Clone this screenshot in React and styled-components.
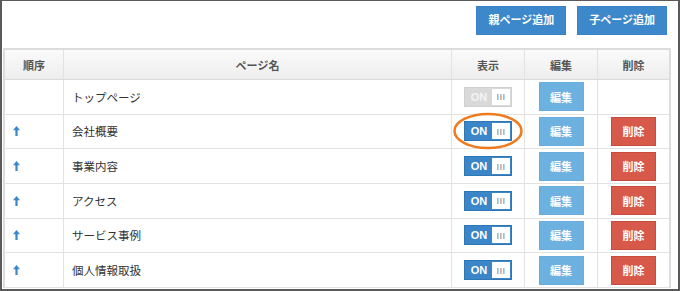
import React from "react";
import styled, { createGlobalStyle, css } from "styled-components";

const Global = createGlobalStyle`
  html, body { margin: 0; padding: 0; background: #fff; }
  body { font-family: "Liberation Sans", "Noto Sans CJK JP", sans-serif; }
  * { box-sizing: border-box; }
`;

const Frame = styled.div`
  width: 680px;
  height: 291px;
  border-style: solid;
  border-color: #5a5a5a;
  border-width: 1px 2px 2px 2px;
  background: #fff;
  overflow: hidden;
`;

const Toolbar = styled.div`
  display: flex;
  justify-content: flex-end;
  gap: 11px;
  padding: 5px 11px 0 0;
  margin-bottom: 13px;
`;

const PrimaryButton = styled.button`
  height: 29px;
  padding: 0 11px;
  background: #3d88ca;
  border: 1px solid #3a84c6;
  color: #fff;
  font-family: "Liberation Sans", "Noto Sans CJK JP", sans-serif;
  font-weight: 700;
  font-size: 11px;
  line-height: 1;
  border-radius: 0;
  cursor: pointer;
`;

const Table = styled.div`
  margin: 0 7px 0 1px;
  border: 2px solid #dcdcdc;
  border-bottom: none;
  display: grid;
  grid-template-columns: 59px 388px 73px 73px 1fr;
  grid-template-rows: 30px repeat(6, 34.67px);
`;

const Cell = styled.div`
  position: relative;
  display: flex;
  align-items: center;
  justify-content: ${(p) => (p.$align === "left" ? "flex-start" : "center")};
  padding: ${(p) => (p.$align === "left" ? "0 0 0 8px" : "0")};
  border-bottom: 1px solid #e2e2e2;
  border-right: ${(p) => (p.$last ? "none" : "1px solid #e2e2e2")};
  font-size: 11.5px;
  color: #333;
`;

const HeadCell = styled(Cell)`
  background: linear-gradient(#fbfbfb, #ededed);
  border-bottom: 1px solid #dadada;
  font-weight: 700;
  font-size: 11px;
  color: #555;
`;

const Toggle = styled.div`
  display: flex;
  width: 48px;
  height: 20px;
  padding: 1px;
  ${(p) =>
    p.$disabled
      ? css`
          background: #d9d9d9;
          border: 1px solid #d0d0d0;
        `
      : css`
          background: #3b86c8;
          border: 1px solid #2f76b5;
        `}
`;

const ToggleLabel = styled.span`
  flex: 1;
  display: flex;
  align-items: center;
  justify-content: center;
  font-family: "Liberation Sans", sans-serif;
  font-weight: 700;
  font-size: 11px;
  color: ${(p) => (p.$disabled ? "#f4f4f4" : "#fff")};
`;

const Knob = styled.span`
  width: 18px;
  display: flex;
  align-items: center;
  justify-content: center;
  background: #fff;
  font-family: "Liberation Sans", sans-serif;
  font-size: 9.5px;
  color: #858585;
  letter-spacing: 0.4px;
`;

const SmallButton = styled.button`
  width: 45px;
  height: 29px;
  border-radius: 0;
  font-family: "Liberation Sans", "Noto Sans CJK JP", sans-serif;
  font-weight: 700;
  font-size: 11px;
  color: #fff;
  padding: 0;
  cursor: pointer;
  ${(p) =>
    p.$variant === "danger"
      ? css`
          background: #d6594a;
          border: 1px solid #c84c3e;
        `
      : css`
          background: #6db1e1;
          border: 1px solid #69ade0;
        `}
`;

const Highlight = styled.svg`
  position: absolute;
  left: 50%;
  top: 50%;
  width: 72px;
  height: 40px;
  transform: translate(-50%, -50%);
  overflow: visible;
  pointer-events: none;
`;

const ArrowUp = () => (
  <svg width="7" height="10" viewBox="0 0 7 10">
    <path d="M3.5 0 L7 4.2 L4.6 4.2 L4.6 10 L2.4 10 L2.4 4.2 L0 4.2 Z" fill="#3b86c8" />
  </svg>
);

const rows = [
  { name: "トップページ", top: true },
  { name: "会社概要", highlight: true },
  { name: "事業内容" },
  { name: "アクセス" },
  { name: "サービス事例" },
  { name: "個人情報取扱" },
];

export default function App() {
  return (
    <>
      <Global />
      <Frame>
        <Toolbar>
          <PrimaryButton>親ページ追加</PrimaryButton>
          <PrimaryButton>子ページ追加</PrimaryButton>
        </Toolbar>
        <Table>
          <HeadCell>順序</HeadCell>
          <HeadCell>ページ名</HeadCell>
          <HeadCell>表示</HeadCell>
          <HeadCell>編集</HeadCell>
          <HeadCell $last>削除</HeadCell>
          {rows.map((r) => (
            <React.Fragment key={r.name}>
              <Cell $align="left">{!r.top && <ArrowUp />}</Cell>
              <Cell $align="left">{r.name}</Cell>
              <Cell>
                <Toggle $disabled={r.top}>
                  <ToggleLabel $disabled={r.top}>ON</ToggleLabel>
                  <Knob>III</Knob>
                </Toggle>
                {r.highlight && (
                  <Highlight viewBox="0 0 72 40">
                    <ellipse cx="36" cy="20" rx="33.5" ry="17" fill="none" stroke="#f07a1e" strokeWidth="2.5" />
                  </Highlight>
                )}
              </Cell>
              <Cell>
                <SmallButton>編集</SmallButton>
              </Cell>
              <Cell $last>
                {!r.top && <SmallButton $variant="danger">削除</SmallButton>}
              </Cell>
            </React.Fragment>
          ))}
        </Table>
      </Frame>
    </>
  );
}
